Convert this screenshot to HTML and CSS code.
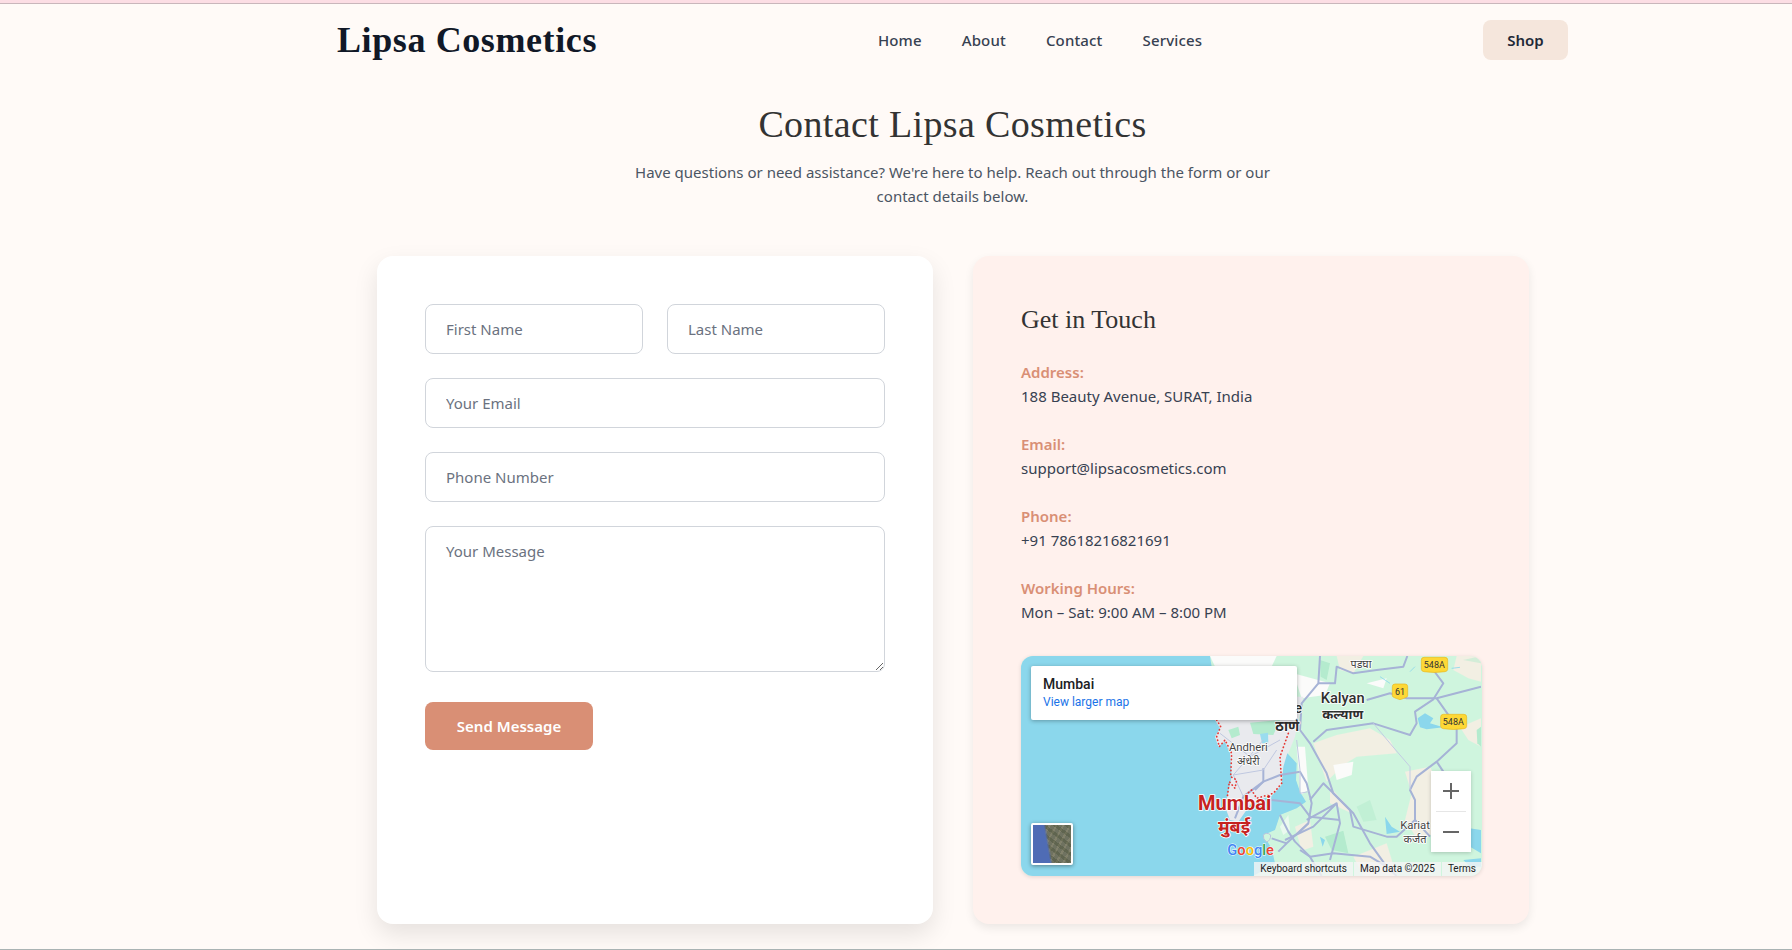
FILE: index.html
```html
<!DOCTYPE html>
<html lang="en">
<head>
<meta charset="utf-8">
<title>Contact Lipsa Cosmetics</title>
<link rel="stylesheet" href="styles.css">
</head>
<body>
<div class="topline"></div>
<div class="page">
  <header class="header">
    <a class="logo">Lipsa Cosmetics</a>
    <nav class="nav">
      <a>Home</a><a>About</a><a>Contact</a><a>Services</a>
    </nav>
    <a class="shop">Shop</a>
  </header>
  <section class="intro">
    <h1>Contact Lipsa Cosmetics</h1>
    <p>Have questions or need assistance? We're here to help. Reach out through the form or our contact details below.</p>
  </section>
  <section class="cards">
    <form class="card form-card">
      <div class="row">
        <input class="field" placeholder="First Name">
        <input class="field" placeholder="Last Name">
      </div>
      <input class="field" placeholder="Your Email">
      <input class="field" placeholder="Phone Number">
      <textarea class="field message" placeholder="Your Message"></textarea>
      <button class="send" type="button">Send Message</button>
    </form>
    <aside class="card info-card">
      <h2>Get in Touch</h2>
      <dl class="details">
        <div><dt>Address:</dt><dd>188 Beauty Avenue, SURAT, India</dd></div>
        <div><dt>Email:</dt><dd>support@lipsacosmetics.com</dd></div>
        <div><dt>Phone:</dt><dd>+91 78618216821691</dd></div>
        <div><dt>Working Hours:</dt><dd>Mon – Sat: 9:00 AM – 8:00 PM</dd></div>
      </dl>
      <div class="map">
        <svg class="map-art" viewBox="0 0 461 220" width="461" height="220">
          <defs><filter id="soft" x="0" y="0" width="1" height="1"><feGaussianBlur stdDeviation=".5"/></filter></defs>
          <rect width="461" height="220" fill="#cff5de"/>
          <g filter="url(#soft)">
            <g transform="translate(209,-16) scale(.33333)">
              <g fill="#f2efe3">
                <path d="M680 48H753V125L715 115L670 90Z"/>
                <path d="M250 310L320 285L420 265L480 300L500 340L440 345L380 350L340 375L290 425Z"/>
                <path d="M525 395L600 380L625 430L640 470L620 570L570 610L525 540L545 460Z"/>
                <path d="M690 262L753 235V320L715 300Z"/>
                <path d="M195 560L240 540L250 620L215 632Z"/>
                <path d="M370 650L470 610L500 708H400Z"/>
                <path d="M300 440L345 490L365 520L300 490Z"/>
                <path d="M320 48H400L370 100L330 90Z"/>
              </g>
              <g fill="#fbfbfa">
                <path d="M190 100L300 130L285 165L215 175Z"/>
                <path d="M310 375L370 365L365 405L320 420Z"/>
                <path d="M-60 48H140L120 90H-40Z"/>
                <path d="M200 320L225 320L235 450L212 465Z"/>
                <path d="M410 130L470 115L460 145Z"/>
              </g>
              <g fill="#b4ebce">
                <path d="M285 590L340 572L355 640L305 630Z"/>
                <path d="M270 60L300 70L290 120L272 110Z"/>
                <path d="M380 500L420 480L440 540L400 545Z" opacity=".5"/>
                <path d="M700 60L753 48V70Z" opacity=".5"/>
                <path d="M740 270L753 260V320L742 310Z"/>
              </g>
            </g>
            <g transform="translate(179,64) scale(.33333)">
              <path fill="#e9eaee" d="M40 -70H310L285 50L265 100L240 205L100 320L60 260L40 0Z"/>
              <path fill="#b4ebce" d="M150 8L240 0L220 45L160 42Z"/>
              <path fill="#b4ebce" d="M85 30L115 20L120 45L95 55Z"/>
              <path fill="#9adcee" d="M180 42L204 38L205 68L186 70Z"/>
              <path fill="#8bd7ec" d="M-537 -192H30L50 -60L45 0L60 25L45 50L55 80L75 65L90 100L95 170L85 215L75 260L90 300L115 305L150 255L175 240L215 228L245 195L250 140L262 100L290 130L288 180L300 215L318 245L290 265L240 285L225 330L190 345L215 385L225 430L160 468H-537Z"/>
              <path fill="#cff5de" stroke="#b9c2dc" stroke-width="3" d="M190 345Q200 335 212 345Q212 362 200 366Q188 358 190 345Z"/>
              <path fill="#fbfbfa" d="M240 320L265 285L270 330L250 345Z" opacity=".6"/>
              <g fill="none" stroke="#a6b3d6" stroke-width="6" stroke-linejoin="round">
                <path d="M105 295L130 230L190 185L240 165L300 155L320 190L335 250L325 310L260 370L235 395"/>
                <path d="M215 240L300 250L330 290L420 300"/>
                <path d="M240 285L265 335L285 365L330 410L350 445L365 468"/>
                <path d="M190 145L190 185L165 210"/>
                <path d="M215 355L260 370M300 335L325 310"/>
              </g>
              <g fill="none" stroke="#c0c8e0" stroke-width="3">
                <path d="M130 230L100 165L190 60M60 40L150 110L240 60M100 165L190 150L230 90"/>
                <path d="M290 60L300 150L300 220L325 215"/>
              </g>
            </g>
            <g transform="translate(209,-16) scale(.33333)">
              <g fill="#8bd7ec">
                <path d="M563 235L585 220L610 235L600 250L640 262L590 268L570 262Z"/>
                <path d="M465 530L485 560L510 575L470 582Z"/>
                <path d="M690 560L753 570V640L720 620Z"/>
                <path d="M700 660L753 655V680L720 680Z"/>
                <path d="M270 590L285 600L278 620Z"/>
              </g>
              <g fill="none" stroke="#8bd7ec" stroke-width="2.5">
                <path d="M450 110L480 130"/>
                <path d="M540 95L555 80"/>
                <path d="M665 85L690 82"/>
              </g>
              <g fill="none" stroke="#a6b3d6" stroke-width="6" stroke-linejoin="round">
                <path d="M270 48L265 130L215 190L210 270L240 310L290 400L310 460L370 520L420 610L470 680L500 708"/>
                <path d="M532 48L520 80L440 90L370 100L320 80L315 130L265 130"/>
                <path d="M250 305L290 270L430 250L540 285L560 250L555 215L610 178L640 130L610 90"/>
                <path d="M410 180L480 160L530 175L620 175L753 140"/>
                <path d="M620 175L680 260L680 310L620 365L560 410L540 450L555 480L555 540L600 590"/>
                <path d="M620 365L640 395"/>
                <path d="M240 480L280 430L310 460L360 510L370 560L470 590L500 590L555 540"/>
                <path d="M230 540L320 490L330 550L300 660"/>
                <path d="M165 600L250 560L320 490"/>
                <path d="M210 630L240 650L310 640L420 650L470 680"/>
              </g>
              <path fill="none" stroke="#c3cbe3" stroke-width="3" d="M430 250L480 310L540 380L540 450"/>
              <path fill="none" stroke="#e53935" stroke-width="5" stroke-linecap="round" stroke-dasharray="1 10" d="M-40 240L-28 260L-40 290L-32 320L-15 300L5 340L2 410L20 420L15 445L-2 425L-8 470M175 280L150 350L155 430L130 460L80 475L65 450L40 470"/>
            </g>
          </g>
          <g transform="translate(209,-16) scale(.33333)">
            <g font-family="Roboto, sans-serif" text-anchor="middle" stroke="#fff" stroke-width="5" paint-order="stroke" stroke-linejoin="round">
              <text x="338" y="188" font-size="44" font-weight="500" fill="#2f2f2f">Kalyan</text>
              <text x="338" y="236" font-size="40" font-weight="700" fill="#2f2f2f" font-family="'Noto Sans', Roboto, sans-serif">कल्याण</text>
              <text x="170" y="220" font-size="42" font-weight="500" fill="#2f2f2f" text-anchor="start">ne</text>
              <text x="172" y="272" font-size="42" font-weight="700" fill="#2f2f2f" font-family="'Noto Sans', Roboto, sans-serif">ठाणे</text>
              <text x="55" y="332" font-size="34" fill="#444">Andheri</text>
              <text x="55" y="374" font-size="33" fill="#444" font-family="'Noto Sans', Roboto, sans-serif">अंधेरी</text>
              <text x="555" y="566" font-size="34" fill="#444">Kariat</text>
              <text x="555" y="608" font-size="33" fill="#444" font-family="'Noto Sans', Roboto, sans-serif">कर्जत</text>
              <text x="393" y="84" font-size="32" fill="#444" font-family="'Noto Sans', Roboto, sans-serif">पडघा</text>
              <text x="14" y="510" font-size="60" font-weight="700" fill="#c5221f">Mumbai</text>
              <text x="12" y="578" font-size="54" font-weight="700" fill="#c5221f" font-family="'Noto Sans', Roboto, sans-serif">मुंबई</text>
            </g>
            <g font-family="Roboto, sans-serif" font-size="27" text-anchor="middle" fill="#333">
              <path fill="#fdd835" stroke="#e8b820" stroke-width="2" d="M574 60Q574 52 582 52H645Q653 52 653 60V88Q653 94 645 95Q613 100 582 95Q574 94 574 88Z"/>
              <text x="613" y="84">548A</text>
              <path fill="#fdd835" stroke="#e8b820" stroke-width="2" d="M632 231Q632 223 640 223H702Q710 223 710 231V259Q710 265 702 266Q670 271 640 266Q632 265 632 259Z"/>
              <text x="670" y="255">548A</text>
              <path fill="#fdd835" stroke="#e8b820" stroke-width="2" d="M487 140Q487 132 495 132H525Q533 132 533 140V168Q533 172 510 179Q487 172 487 168Z"/>
              <text x="510" y="165">61</text>
            </g>
          </g>
          <g transform="translate(-11,-16) scale(.33333)" font-family="Roboto, sans-serif" font-size="44" font-weight="500" stroke="#fff" stroke-width="3" paint-order="stroke">
            <text x="652" y="644"><tspan fill="#4285f4">G</tspan><tspan fill="#ea4335">o</tspan><tspan fill="#fbbc05">o</tspan><tspan fill="#4285f4">g</tspan><tspan fill="#34a853">l</tspan><tspan fill="#ea4335">e</tspan></text>
          </g>
        </svg>
        <div class="place-card">
          <strong>Mumbai</strong>
          <a>View larger map</a>
        </div>
        <div class="thumb"></div>
        <div class="zoom-ctl">
          <svg viewBox="0 0 18 18" width="18" height="18"><path d="M8 1h2v7h7v2h-7v7H8v-7H1V8h7z"/></svg>
          <i></i>
          <svg viewBox="0 0 18 18" width="18" height="18"><path d="M1 8h16v2H1z"/></svg>
        </div>
        <div class="attrib">
          <span>Keyboard shortcuts</span><span>Map data ©2025</span><span>Terms</span>
        </div>
      </div>
    </aside>
  </section>
</div>
<div class="bottomline"></div>
</body>
</html>
```
FILE: styles.css
```css
* { box-sizing: border-box; }
html, body { margin: 0; height: 950px; overflow: hidden; }
body {
  background: #fffaf7;
  color: #374151;
  font-family: "Noto Sans", "Open Sans", sans-serif;
  font-size: 15px;
  line-height: 24px;
  position: relative;
}
.topline { height: 4px; background: #fcdde4; border-bottom: 1px solid #c9b6bb; }
.page { padding: 0 224px 0 337px; }
.header {
  height: 72px;
  display: flex;
  align-items: center;
  justify-content: space-between;
}
.logo {
  font-family: "Liberation Serif", serif;
  font-weight: 700;
  font-size: 36px;
  letter-spacing: .6px;
  color: #111827;
  line-height: 40px;
  width: 260px;
  white-space: nowrap;
}
.nav { display: flex; gap: 40px; font-weight: 500; color: #374151; letter-spacing: .15px; }
.shop {
  width: 85px;
  height: 40px;
  display: flex;
  align-items: center;
  justify-content: center;
  background: #f5e6dc;
  border-radius: 8px;
  color: #1f2937;
  font-weight: 600;
}
.intro { text-align: center; height: 108px; padding-top: 26px; }
.intro h1 {
  margin: 0 0 14px;
  font-family: "Liberation Serif", serif;
  font-weight: 400;
  font-size: 38px;
  line-height: 44px;
  letter-spacing: .36px;
  color: #333;
}
.intro p { margin: 0 auto; width: 672px; color: #4b5563; }
.cards {
  margin: 72px 39px 0 40px;
  display: grid;
  grid-template-columns: 556px 556px;
  gap: 40px;
  height: 667px;
}
.card { border-radius: 16px; padding: 48px; }
.form-card {
  background: #fff;
  box-shadow: 0 10px 25px rgba(0, 0, 0, .1);
  display: flex;
  flex-direction: column;
  gap: 24px;
}
.row { display: grid; grid-template-columns: 1fr 1fr; gap: 24px; }
.field {
  display: block;
  width: 100%;
  height: 50px;
  padding: 12px 20px;
  border: 1px solid #d1d5db;
  border-radius: 8px;
  background: #fff;
  font: inherit;
  color: #374151;
  outline: none;
}
.field::placeholder { color: #6b7280; opacity: 1; }
.message { height: 146px; padding-top: 12px; resize: vertical; }
.send {
  margin-top: 6px;
  width: 168px;
  height: 48px;
  border: 0;
  border-radius: 8px;
  background: #d98f75;
  color: #fff;
  font: inherit;
  font-weight: 600;
}
.info-card {
  background: #fff1ed;
  box-shadow: 0 4px 10px rgba(0, 0, 0, .08);
}
.info-card h2 {
  margin: 0 0 24px;
  font-family: "Liberation Serif", serif;
  font-weight: 400;
  font-size: 26px;
  line-height: 32px;
  color: #333;
}
.details { margin: 0; display: flex; flex-direction: column; gap: 24px; }
.details dt { color: #d98f75; font-weight: 600; }
.details dd { margin: 0; color: #374151; }
.map {
  position: relative;
  margin-top: 32px;
  width: 461px;
  height: 220px;
  border-radius: 12px;
  overflow: hidden;
  box-shadow: 0 1px 4px rgba(0, 0, 0, .12);
  font-family: Roboto, sans-serif;
}
.map-art { display: block; }
.place-card {
  position: absolute;
  left: 10px;
  top: 10px;
  width: 266px;
  height: 54px;
  padding: 9px 12px;
  background: #fff;
  border-radius: 2px;
  box-shadow: 0 1px 4px rgba(0, 0, 0, .3);
  display: flex;
  flex-direction: column;
}
.place-card strong { font-size: 14px; font-weight: 500; line-height: 19px; color: #202124; }
.place-card a { font-size: 12px; line-height: 17px; color: #1a73e8; }
.thumb {
  position: absolute;
  left: 10px;
  top: 167px;
  width: 42px;
  height: 42px;
  border: 2px solid #fff;
  border-radius: 2px;
  background:
    linear-gradient(80deg, #4f6cb5 0 38%, rgba(79, 108, 181, 0) 44%),
    repeating-linear-gradient(37deg, rgba(55, 65, 35, .28) 0 3px, rgba(55, 65, 35, 0) 3px 7px),
    repeating-linear-gradient(-61deg, rgba(175, 165, 135, .28) 0 2px, rgba(175, 165, 135, 0) 2px 6px),
    #6f7260;
  box-shadow: 0 1px 4px rgba(0, 0, 0, .4);
}
.zoom-ctl {
  position: absolute;
  left: 410px;
  top: 115px;
  width: 40px;
  height: 81px;
  background: #fff;
  box-shadow: 0 1px 4px rgba(0, 0, 0, .2);
  display: flex;
  flex-direction: column;
  align-items: center;
  justify-content: space-between;
  padding: 11px 0;
  fill: #666;
}
.zoom-ctl i { width: 30px; height: 1px; background: #e6e6e6; }
.attrib {
  position: absolute;
  right: 0;
  bottom: 0;
  height: 14px;
  display: flex;
  gap: 1px;
  font-size: 10px;
  line-height: 14px;
  color: #202124;
}
.attrib span { padding: 0 6px; background: rgba(245, 245, 245, .8); white-space: nowrap; }
.bottomline {
  position: absolute;
  left: 0;
  right: 0;
  bottom: 0;
  height: 1px;
  background: #a9b3b3;
}
```
